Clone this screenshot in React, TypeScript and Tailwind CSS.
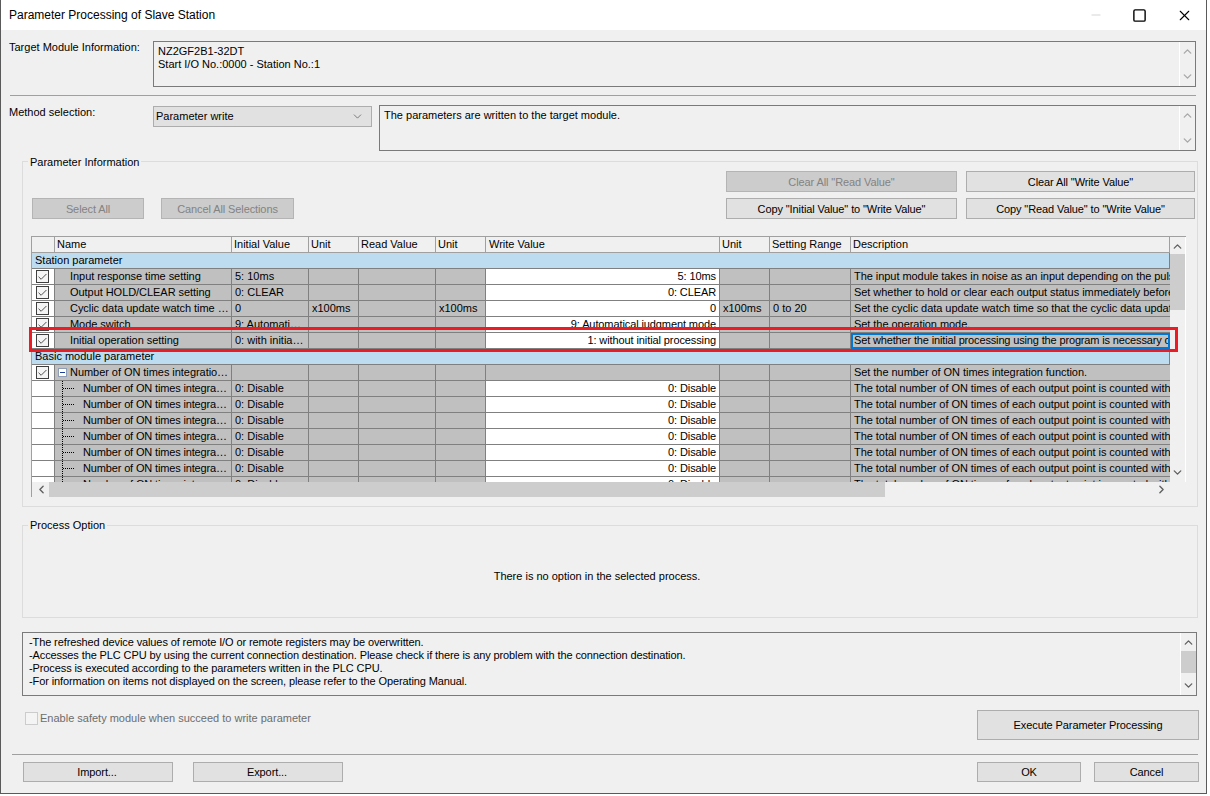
import React from 'react';
import { ChevronDown, ChevronLeft, ChevronRight, ChevronUp, Minus, Square, X, Check } from 'lucide-react';

const COLS = 'grid grid-cols-[23px_177px_77px_50px_77px_50px_234px_50px_81px_319px]';

const DESC_TOTAL = 'The total number of ON times of each output point is counted with the ON times integration function.';

type Row = {
  name: string;
  initial?: string;
  unit?: string;
  readUnit?: string;
  write?: string;
  writeUnit?: string;
  range?: string;
  desc: string;
  checked?: boolean;
  child?: boolean;
  parent?: boolean;
  selected?: boolean;
};

const station: Row[] = [
  { name: 'Input response time setting', initial: '5: 10ms', write: '5: 10ms', desc: 'The input module takes in noise as an input depending on the pulse width.', checked: true },
  { name: 'Output HOLD/CLEAR setting', initial: '0: CLEAR', write: '0: CLEAR', desc: 'Set whether to hold or clear each output status immediately before the stop.', checked: true },
  { name: 'Cyclic data update watch time setting', initial: '0', unit: 'x100ms', readUnit: 'x100ms', write: '0', writeUnit: 'x100ms', range: '0 to 20', desc: 'Set the cyclic data update watch time so that the cyclic data update can be checked.', checked: true },
  { name: 'Mode switch', initial: '9: Automatical judgment mode', write: '9: Automatical judgment mode', desc: 'Set the operation mode.', checked: true },
  { name: 'Initial operation setting', initial: '0: with initial processing', write: '1: without initial processing', desc: 'Set whether the initial processing using the program is necessary or not for the module.', checked: true, selected: true },
];

const integration: Row[] = [
  { name: 'Number of ON times integration function', desc: 'Set the number of ON times integration function.', checked: true, parent: true },
  ...Array.from({ length: 7 }, () => ({
    name: 'Number of ON times integration',
    initial: '0: Disable',
    write: '0: Disable',
    desc: DESC_TOTAL,
    child: true,
  })),
];

function Btn({ label, disabled, className }: { label: string; disabled?: boolean; className: string }) {
  return (
    <button
      className={`border flex items-center justify-center tracking-[-0.1px] ${
        disabled ? 'border-[#b4b4b4] bg-[#cccccc] text-[#838383]' : 'border-[#adadad] bg-[#e1e1e1] text-black'
      } ${className}`}
    >
      {label}
    </button>
  );
}

function VScroll({ thumb, className }: { thumb?: string; className: string }) {
  return (
    <div className={`flex flex-col items-center justify-between relative shrink-0 bg-[#f0f0f0] py-[3px] ${className}`}>
      <ChevronUp size={13} strokeWidth={2.5} />
      {thumb && <div className={`absolute left-0 right-0 bg-[#cdcdcd] ${thumb}`} />}
      <ChevronDown size={13} strokeWidth={2.5} />
    </div>
  );
}

function Cell({ children, right, white, className = '' }: { children?: React.ReactNode; right?: boolean; white?: boolean; className?: string }) {
  return (
    <div
      className={`h-4 border-r border-b border-[#808080] px-[3px] leading-[15px] whitespace-nowrap overflow-hidden ${
        white ? 'bg-white' : 'bg-[#c0c0c0]'
      } ${right ? 'text-right' : ''} ${className}`}
    >
      {children}
    </div>
  );
}

function CheckBox() {
  return (
    <div className="w-[13px] h-[13px] border border-[#3f3f3f] bg-[#f4f4f4] flex items-center justify-center text-[#404040]">
      <Check size={12} strokeWidth={2} />
    </div>
  );
}

function ParamRow({ row }: { row: Row }) {
  return (
    <div className={COLS}>
      <div className="h-4 border-r border-b border-[#808080] bg-white flex items-center justify-start pl-[4px]">
        {row.checked && <CheckBox />}
      </div>
      <div className="h-4 border-r border-b border-[#808080] bg-[#c0c0c0] flex items-center whitespace-nowrap overflow-hidden leading-[15px]">
        {row.child && (
          <>
            <div className="ml-[7px] w-[12px] h-full shrink-0 border-l border-dotted border-black flex items-center">
              <div className="w-[11px] border-t border-dotted border-black" />
            </div>
            <span className="ml-[9px] truncate pr-[2px] tracking-[-0.15px]">{row.name}</span>
          </>
        )}
        {row.parent && (
          <>
            <div className="ml-[3px] w-[9px] h-[9px] shrink-0 border border-[#8f9db5] bg-white flex items-center justify-center">
              <div className="w-[5px] h-px bg-[#1f3f9e]" />
            </div>
            <span className="ml-[3px] truncate pr-[2px] tracking-[-0.05px]">{row.name}</span>
          </>
        )}
        {!row.child && !row.parent && <span className="ml-[15px] truncate pr-[2px] tracking-[-0.05px]">{row.name}</span>}
      </div>
      <Cell className="text-ellipsis">{row.initial}</Cell>
      <Cell>{row.unit}</Cell>
      <Cell />
      <Cell>{row.readUnit}</Cell>
      <Cell right white={!!row.write} className="tracking-[-0.1px]">{row.write}</Cell>
      <Cell>{row.writeUnit}</Cell>
      <Cell>{row.range}</Cell>
      {row.selected ? (
        <div className="h-4 border-2 border-[#0078d7] bg-[#c0c0c0] px-[1px] leading-[11px] tracking-[-0.15px] whitespace-nowrap overflow-hidden">{row.desc}</div>
      ) : (
        <Cell className="border-r-0 tracking-[-0.05px]">{row.desc}</Cell>
      )}
    </div>
  );
}

function CategoryRow({ label }: { label: string }) {
  return (
    <div className="w-[1138px] h-4 bg-[#bedcef] border-b border-[#808080] border-r px-[3px] leading-[15px]">{label}</div>
  );
}

function ParamTable() {
  const headers = ['', 'Name', 'Initial Value', 'Unit', 'Read Value', 'Unit', 'Write Value', 'Unit', 'Setting Range', 'Description'];
  return (
    <div className="relative ml-2 w-[1155px] h-[261px] border-t border-l border-[#a0a0a0] bg-[#f0f0f0] flex flex-col">
      <div className="flex h-[245px]">
        <div className="w-[1138px] overflow-hidden">
          <div className={COLS}>
            {headers.map((h, i) => (
              <div key={i} className={`h-4 bg-[#f0f0f0] border-r border-b border-[#a0a0a0] leading-[14px] whitespace-nowrap overflow-hidden ${i === 6 ? 'px-[3px]' : 'px-[2px]'}`}>
                {h}
              </div>
            ))}
          </div>
          <CategoryRow label="Station parameter" />
          {station.map((r) => <ParamRow key={r.name} row={r} />)}
          <CategoryRow label="Basic module parameter" />
          {integration.map((r, i) => <ParamRow key={i} row={r} />)}
        </div>
        <VScroll className="w-[15px] h-[245px] text-[#606060]" thumb="top-[17px] h-[56px]" />
        <div className="w-px bg-white" />
      </div>
      <div className="relative flex items-center justify-between h-[15px] w-[1153px] bg-[#f0f0f0] text-[#606060] pl-[3px] pr-[17px]">
        <ChevronLeft size={13} strokeWidth={2.5} />
        <div className="absolute left-[17px] top-0 h-full w-[836px] bg-[#cdcdcd]" />
        <ChevronRight size={13} strokeWidth={2.5} />
      </div>
    </div>
  );
}

export default function App() {
  return (
    <div className="w-[1210px] h-[796px] bg-white font-['Liberation_Sans',sans-serif] text-[11px] text-black">
      <div className="w-[1207px] h-[794px] border-l border-r border-b border-[#5a5a5a] bg-[#f0f0f0] flex flex-col relative overflow-hidden">
        {/* title bar */}
        <div className="h-[30px] bg-white flex items-center justify-between shrink-0">
          <span className="ml-2 text-[12px]">Parameter Processing of Slave Station</span>
          <div className="flex items-center gap-[29px] mr-[13px] text-black">
            <Minus size={14} strokeWidth={1} className="text-[#b9b9b9]" />
            <Square size={15} strokeWidth={1.4} absoluteStrokeWidth />
            <X size={17} strokeWidth={1.1} absoluteStrokeWidth />
          </div>
        </div>

        {/* target module */}
        <div className="flex mt-[11px] shrink-0">
          <div className="w-[152px] pl-[8px] -mt-[2px]">Target Module Information:</div>
          <div className="w-[1043px] h-[46px] border border-[#7a7a7a] flex">
            <div className="flex-1 pl-[4px] pt-[3px] leading-[13px]">
              <div>NZ2GF2B1-32DT</div>
              <div>Start I/O No.:0000 - Station No.:1</div>
            </div>
            <VScroll className="w-[16px] border-l border-white text-[#a8a8a8]" />
          </div>
        </div>

        <div className="mt-2 ml-[9px] w-[1186px] h-px bg-[#a0a0a0] shrink-0" />

        {/* method selection */}
        <div className="flex mt-[9px] shrink-0">
          <div className="w-[152px] pl-[8px] -mt-[1px]">Method selection:</div>
          <div className="w-[219px] h-[21px] mt-[1px] border border-[#adadad] bg-[#e1e1e1] flex items-center justify-between pl-[2px] pr-[7px]">
            <span>Parameter write</span>
            <ChevronDown size={13} strokeWidth={1.2} className="text-[#444444]" />
          </div>
          <div className="ml-[7px] w-[817px] h-[46px] border border-[#7a7a7a] flex">
            <div className="flex-1 pl-[4px] pt-[1px]">The parameters are written to the target module.</div>
            <VScroll className="w-[16px] border-l border-white text-[#a8a8a8]" />
          </div>
        </div>

        {/* parameter information */}
        <div className="relative mt-[10px] ml-[21px] w-[1176px] h-[346px] border border-[#dcdcdc] shrink-0">
          <div className="absolute -top-[6px] left-[5px] bg-[#f0f0f0] px-[2px] leading-[12px]">Parameter Information</div>
          <div className="flex justify-between items-end mt-[9px] pl-[9px] pr-[2px]">
            <div className="flex gap-[17px]">
              <Btn disabled label="Select All" className="w-[112px] h-[21px] pt-[2px]" />
              <Btn disabled label="Cancel All Selections" className="w-[133px] h-[21px] pt-[2px]" />
            </div>
            <div className="grid grid-cols-[231px_229px] gap-x-[9px] gap-y-[6px]">
              <Btn disabled label={'Clear All "Read Value"'} className="h-[21px] pt-[2px]" />
              <Btn label={'Clear All "Write Value"'} className="h-[21px] pt-[2px]" />
              <Btn label={'Copy "Initial Value" to "Write Value"'} className="h-[21px] pt-[2px]" />
              <Btn label={'Copy "Read Value" to "Write Value"'} className="h-[21px] pt-[2px]" />
            </div>
          </div>
          <div className="mt-[17px]">
            <ParamTable />
          </div>
        </div>

        {/* process option */}
        <div className="relative mt-[18px] ml-[21px] w-[1176px] h-[93px] border border-[#dcdcdc] flex items-center justify-center shrink-0">
          <div className="absolute -top-[7px] left-[5px] bg-[#f0f0f0] px-[2px] leading-[12px]">Process Option</div>
          <span className="mt-[9px] mr-[26px]">There is no option in the selected process.</span>
        </div>

        {/* notes */}
        <div className="mt-[14px] ml-[21px] w-[1175px] h-[64px] border border-[#7a7a7a] flex shrink-0">
          <div className="flex-1 pl-[6px] pt-[3px] leading-[13px] tracking-[-0.11px]">
            <div>-The refreshed device values of remote I/O or remote registers may be overwritten.</div>
            <div>-Accesses the PLC CPU by using the current connection destination. Please check if there is any problem with the connection destination.</div>
            <div>-Process is executed according to the parameters written in the PLC CPU.</div>
            <div>-For information on items not displayed on the screen, please refer to the Operating Manual.</div>
          </div>
          <VScroll className="w-[16px] border-l border-white text-[#606060]" thumb="top-[18px] h-[22px]" />
        </div>

        {/* execute */}
        <div className="flex justify-between mt-[14px] pl-[24px] shrink-0">
          <div className="flex items-start gap-[2px] mt-[2px] text-[#6d6d6d]">
            <div className="w-[13px] h-[13px] border border-[#cccccc] bg-[#f4f4f4]" />
            <span className="leading-[12px]">Enable safety module when succeed to write parameter</span>
          </div>
          <Btn label="Execute Parameter Processing" className="w-[222px] h-[30px] mr-[7px]" />
        </div>

        <div className="mt-[14px] ml-[11px] w-[1186px] h-px bg-[#a0a0a0] shrink-0" />

        {/* footer */}
        <div className="flex justify-between mt-[7px] pl-[22px] pr-[7px] shrink-0">
          <div className="flex gap-[20px]">
            <Btn label="Import..." className="w-[150px] h-[20px] pr-[2px]" />
            <Btn label="Export..." className="w-[150px] h-[20px] pr-[2px]" />
          </div>
          <div className="flex gap-[13px]">
            <Btn label="OK" className="w-[104px] h-[20px]" />
            <Btn label="Cancel" className="w-[105px] h-[20px]" />
          </div>
        </div>

        {/* red highlight drawn over the table */}
        <div className="absolute left-[28px] top-[327px] w-[1149px] h-[25px] border-[3px] border-[#ed1c24] pointer-events-none" />
      </div>
    </div>
  );
}
